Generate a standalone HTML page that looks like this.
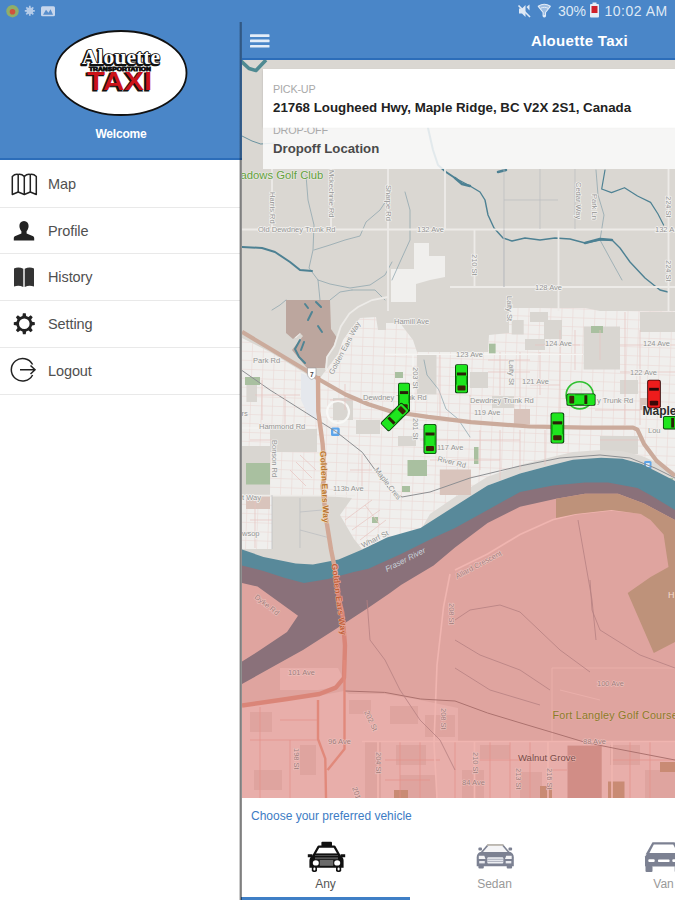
<!DOCTYPE html>
<html lang="en">
<head>
<meta charset="utf-8">
<title>Alouette Taxi</title>
<style>
*{box-sizing:border-box;margin:0;padding:0}
html,body{width:675px;height:900px;overflow:hidden;background:#fff}
body{font-family:"Liberation Sans",sans-serif;position:relative;color:#444}
.abs{position:absolute}
#drawerhead{left:0;top:0;width:675px;height:159.8px;background:#4a86c8;border-bottom:2px solid #2c6db9}
#statusL{left:0;top:0;width:240px;height:22px}
#welcome{left:0;top:127px;width:242px;text-align:center;color:#fff;font-weight:bold;font-size:12px;line-height:14px;letter-spacing:-0.2px}
#menu{left:0;top:160.8px;width:240px}
.mi{height:46.8px;border-bottom:1.5px solid #e9e9e9;position:relative}
.mi span{position:absolute;left:48px;top:14.1px;font-size:14.5px;line-height:18px;color:#505050;letter-spacing:-0.1px}
.mi svg{position:absolute;left:10px;top:10px;width:28px;height:26px}
#main{left:241.5px;top:22px;width:434px;height:878px;background:#fff}
#edge{left:238.6px;top:160px;width:3.2px;height:740px;background:linear-gradient(90deg,rgba(0,0,0,0) 0,rgba(0,0,0,.3) 25%,rgba(0,0,0,.5) 45%,rgba(0,0,0,.5) 80%,rgba(0,0,0,.1) 100%)}
#edgeT{left:238.6px;top:21.5px;width:3.2px;height:138.5px;background:linear-gradient(90deg,rgba(0,0,0,0) 0,rgba(0,0,0,.2) 25%,rgba(0,0,0,.34) 45%,rgba(0,0,0,.34) 80%,rgba(0,0,0,.08) 100%)}
#appbar{left:242px;top:22px;width:433px;height:38px;background:#4a86c8;border-bottom:2.5px solid #2c6db9}
#title{left:531px;top:33px;color:#fff;font-weight:bold;font-size:15px;line-height:16px;letter-spacing:.3px;white-space:nowrap}
#map{left:242px;top:60px;width:433px;height:738px;overflow:hidden;background:#cfccc8}
#pick{left:263px;top:69px;width:412px;height:58px;background:#fff;box-shadow:0 1px 2px rgba(0,0,0,.15)}
#drop{left:263px;top:127px;width:412px;height:41.5px;background:rgba(250,250,250,.86)}
.lbl{font-size:10.8px;line-height:12px;color:#a9a9a9;letter-spacing:-0.2px;white-space:nowrap}
#pickL{left:273px;top:83px}
#dropL{left:273px;top:124.4px}
#addr{left:273px;top:99.5px;font-size:13.3px;line-height:16px;font-weight:bold;color:#222;white-space:nowrap}
#dropT{left:273px;top:141px;font-size:13.2px;line-height:16px;font-weight:bold;color:#4a4a4a;white-space:nowrap}
#bottom{left:243px;top:798px;width:432px;height:102px;background:#fff}
#choose{left:251px;top:809px;font-size:12px;line-height:14px;color:#3d7cc4;white-space:nowrap}
.tab{top:876.6px;width:169px;text-align:center;font-size:12px;line-height:14px}
#sel{left:241px;top:897px;width:169px;height:3px;background:#3f7fc6}
.stat{top:3px;font-size:14px;line-height:16px;color:#dfe9f5;white-space:nowrap}
</style>
</head>
<body>
<div id="drawerhead" class="abs"></div>

<!-- status bar left icons -->
<svg class="abs" style="left:0;top:0" width="120" height="22" viewBox="0 0 120 22">
  <circle cx="12.500" cy="11.200" r="6.200" fill="#8fae6a"/>
  <circle cx="12.500" cy="11.800" r="2.800" fill="#d0523c"/>
  <circle cx="29.800" cy="10.800" r="3.300" fill="#c4d6ee"/>
  <g stroke="#b4cbe8" stroke-width="1.700"><path d="M29.800 5.800v10M24.800 10.800h10M26.300 7.300l7 7M33.300 7.300l-7 7"/></g>
  <rect x="41" y="6.200" width="14" height="10" rx="1.500" fill="#c7d6ec"/>
  <path d="M43 14.700 L46 9.700 L48.500 12.700 L50.500 9.200 L53 14.700Z" fill="#5a8fcc"/>
</svg>

<!-- logo -->
<svg class="abs" style="left:50px;top:26px" width="144" height="96" viewBox="50 26 144 96">
  <ellipse cx="121" cy="73" rx="65.500" ry="42" fill="#fff" stroke="#111" stroke-width="1.800"/>
  <text x="120.300" y="65.200" text-anchor="middle" font-family="'Liberation Serif',serif" font-weight="bold" font-size="22" fill="#111" stroke="#111" stroke-width="2.600" stroke-linejoin="round" textLength="78" lengthAdjust="spacingAndGlyphs">Alouette</text>
  <text x="121" y="64.400" text-anchor="middle" font-family="'Liberation Serif',serif" font-weight="bold" font-size="22" fill="#fff" stroke="#111" stroke-width="1.500" paint-order="stroke" stroke-linejoin="round" textLength="78" lengthAdjust="spacingAndGlyphs">Alouette</text>
  <text x="120" y="70.600" text-anchor="middle" font-family="'Liberation Sans',sans-serif" font-weight="bold" font-size="6.200" fill="#111" stroke="#111" stroke-width=".900" textLength="62" lengthAdjust="spacingAndGlyphs">TRANSPORTATION</text>
  <text x="118.300" y="91.200" text-anchor="middle" font-family="'Liberation Sans',sans-serif" font-weight="bold" font-size="25.600" fill="#111" stroke="#111" stroke-width=".800" textLength="65" lengthAdjust="spacingAndGlyphs">TAXI</text>
  <text x="119.600" y="90.300" text-anchor="middle" font-family="'Liberation Sans',sans-serif" font-weight="bold" font-size="25.600" fill="#cc1219" textLength="65" lengthAdjust="spacingAndGlyphs">TAXI</text>
</svg>
<div id="welcome" class="abs">Welcome</div>

<div id="menu" class="abs">
  <div class="mi"><svg viewBox="0 0 28 26"><g fill="none" stroke="#222" stroke-width="1.5" stroke-linejoin="round"><path d="M2.300 5.500 Q5 2.800 8.200 3.500 Q11.500 2.800 14.300 5.500 Q17 2.800 20.300 3.500 Q23.500 2.800 26.300 5.500 V23.500 L20.300 21 L14.300 23.500 L8.200 21 L2.300 23.500Z"/><path d="M8.200 3.500V21M14.300 5.500V23.500M20.300 3.500V21"/></g></svg><span>Map</span></div>
  <div class="mi"><svg viewBox="0 0 28 26"><path d="M14 3c3 0 4.600 2.200 4.600 5 0 2.300-1 4-2 5.300v2.200l6 2.400c1 .4 1.600 1.200 1.600 2.300V22.500H3.800V20.200c0-1.100.6-1.900 1.600-2.300l6-2.400v-2.200c-1-1.300-2-3-2-5.300 0-2.800 1.600-5 4.600-5z" fill="#222"/></svg><span>Profile</span></div>
  <div class="mi"><svg viewBox="0 0 28 26" style="top:9.200px"><path d="M4 4.500c3-1.300 6-1.300 9.300.3V23c-3.300-1.700-6.300-1.700-9.300-.4zM24 4.500c-3-1.300-6-1.300-9.300.3V23c3.300-1.700 6.300-1.700 9.300-.4z" fill="#333"/></svg><span>History</span></div>
  <div class="mi"><svg viewBox="0 0 28 26"><path fill="#222" fill-rule="evenodd" d="M12.89 2.19L15.71 2.19L16.17 4.92L18.48 5.88L20.73 4.27L22.73 6.27L21.12 8.52L22.08 10.83L24.81 11.29L24.81 14.11L22.08 14.57L21.12 16.88L22.73 19.13L20.73 21.13L18.48 19.52L16.17 20.48L15.71 23.21L12.89 23.21L12.43 20.48L10.12 19.52L7.87 21.13L5.87 19.13L7.48 16.88L6.52 14.57L3.79 14.11L3.79 11.29L6.52 10.83L7.48 8.52L5.87 6.27L7.87 4.27L10.12 5.88L12.43 4.92ZM9.00 12.70a5.30 5.30 0 1 0 10.60 0a5.30 5.30 0 1 0 -10.60 0Z"/></svg><span>Setting</span></div>
  <div class="mi"><svg viewBox="0 0 28 26" style="top:8.200px"><g fill="none" stroke="#222" stroke-width="1.5"><path d="M22.600 8.500A11.300 11.300 0 1 0 22.600 19"/><path d="M10 13.700H25M20.500 9.500L25 13.700L20.500 18"/></g></svg><span>Logout</span></div>
</div>

<div id="main" class="abs"></div>
<div id="appbar" class="abs"></div>
<svg class="abs" style="left:249px;top:33px" width="22" height="16" viewBox="0 0 22 16"><g fill="#e4edf8"><rect x="1" y="1.300" width="19.500" height="2.700" rx=".6"/><rect x="1" y="6.600" width="19.500" height="2.700" rx=".6"/><rect x="1" y="11.900" width="19.500" height="2.700" rx=".6"/></g></svg>
<div id="title" class="abs">Alouette Taxi</div>

<!-- status bar right -->
<svg class="abs" style="left:515px;top:0" width="90" height="22" viewBox="515 0 90 22">
  <path d="M519 8.500h3l3.500-3.500v12l-3.500-3.500h-3z" fill="#dfe9f5"/>
  <path d="M518.500 5.500L530 17" stroke="#dfe9f5" stroke-width="1.600"/>
  <path d="M526.500 7l3 -2.500v6z" fill="#dfe9f5"/>
  <path d="M538.300 6.300c3.600-2.500 8.400-2.500 12 0l-4.800 6.200v3.500h-2.400v-3.500z" fill="#9dbde2" stroke="#e3ecf7" stroke-width="1.100" stroke-linejoin="round"/>
  <path d="M540.500 8.300c2.400-1.300 5.200-1.300 7.600 0" stroke="#e3ecf7" stroke-width="1" fill="none"/>
  <circle cx="544.300" cy="16.300" r="1.300" fill="#e3ecf7"/>
  <rect x="590" y="4" width="9" height="13.500" rx="1" fill="#e6edf6"/>
  <rect x="592.500" y="2.500" width="4" height="2" fill="#e6edf6"/>
  <rect x="591.500" y="6" width="6" height="7" fill="#d0202a"/>
</svg>
<div class="abs stat" style="left:558px">30%</div>
<div class="abs stat" style="left:604.500px;letter-spacing:.5px">10:02 AM</div>

<div id="map" class="abs">
<svg width="433" height="738" viewBox="242 60 433 738" style="display:block">
<defs>
  <pattern id="grid" width="11" height="9" patternUnits="userSpaceOnUse" patternTransform="rotate(2)">
    <path d="M0 .5H11M.5 0V9" stroke="#e2b9b3" stroke-width=".6" fill="none"/>
  </pattern>
  <clipPath id="uclip">
    <path d="M326 370L338 354L343 340L350 330L360 318L376 317L378 330H386V323H400L413 340L417 352H488L489 335L509 333V308H585L600 311H675V479L659 472L642 464L622 458.500L601 457.500L573 459.500L551 465L530 472.500L505 481L487 486L471 495L455 507L420 531L387 538L362 549L354 539L340 515L352 498L326 496L324 476L322 445L318 410L317 382Z"/>
    <path d="M242 338L270 352L303 372L316 380L318 410L322 445L324 476L323 495H272V549H242Z"/>
  </clipPath>
</defs>
<rect x="242" y="59" width="433" height="739" fill="#dad7d2"/>

<!-- urban light regions -->
<g fill="#f0efed">
  <path d="M326 370L338 354L343 340L350 330L360 318L376 317L378 330H386V323H400L413 340L417 352H488L489 335L509 333V308H585L600 311H675V479L659 472L642 464L622 458.500L601 457.500L573 459.500L551 465L530 472.500L505 481L487 486L471 495L455 507L420 531L387 538L362 549L354 539L340 515L352 498L326 496L324 476L322 445L318 410L317 382Z"/>
  <path d="M242 338L270 352L303 372L316 380L318 410L322 445L324 476L323 495H272V549H242Z"/>
  <path d="M391 269H414V243H429V256H445V277L430 280L416 284V302H391Z"/>
  <path d="M300 318L312 322L296 338L288 334Z"/>
</g>
<rect x="242" y="300" width="433" height="260" fill="url(#grid)" clip-path="url(#uclip)" opacity=".42"/>
<!-- grey patches inside the urban belt -->
<g fill="#d9d6d1">
  <rect x="583.700" y="326.500" width="36.300" height="43"/>
  <rect x="544" y="320" width="18" height="19"/>
  <rect x="511.700" y="320" width="12" height="14.500"/>
  <rect x="525" y="339" width="20" height="11"/>
  <rect x="417" y="354.400" width="19.500" height="40"/>
  <rect x="270" y="428.700" width="47" height="23.300"/>
  <rect x="242" y="446" width="28" height="49"/>
  <rect x="246.400" y="384" width="10.600" height="18"/>
  <rect x="333" y="398" width="20" height="22"/>
  <rect x="356" y="420" width="24" height="14"/>
  <rect x="640" y="312" width="35" height="20"/>
  <rect x="530" y="312" width="18" height="10"/>
  <rect x="600" y="436" width="38" height="18"/>
  <rect x="470" y="372" width="18" height="16"/>
  <rect x="492" y="396" width="22" height="12"/>
  <rect x="398" y="436" width="18" height="10"/>
  <rect x="620" y="380" width="18" height="14"/>
  <path d="M455 506L487.600 485.600L520 473.600L552 465L573 459.800L601 457.700L622.400 458.700L641.700 464.100L659 472.700L675 481V472L660 464L642 456L622 451L601 450L573 452L552 457L520 465L487 477L455 497L430 514L420 531Z" fill="#dddad6"/>
</g>
<!-- pale industrial / airport -->
<path d="M301 373L317 379L318 420L308 415L301 400Z" fill="#e5e8ed"/>
<!-- brownish industrial blocks -->
<g fill="#d9c4bc">
  <rect x="439.800" y="469.500" width="31.200" height="25.500"/>
  <rect x="514" y="409" width="16" height="15"/>
  <rect x="246" y="495" width="24" height="14"/>
  <rect x="640" y="398" width="10" height="12"/>
</g>
<!-- parks -->
<g fill="#a9c0a0">
  <rect x="407.500" y="460" width="19.500" height="16"/>
  <rect x="474" y="447" width="4.500" height="17"/>
  <rect x="489" y="343.700" width="6.600" height="9.700"/>
  <rect x="246" y="463" width="24" height="21.500"/>
  <rect x="245" y="377" width="15" height="8"/>
  <rect x="591" y="326" width="12" height="7"/>
  <rect x="395" y="372" width="8" height="6"/>
  <rect x="372" y="517" width="6" height="6"/>
  <rect x="402" y="486" width="8" height="6"/>
  <rect x="667" y="478" width="6" height="14"/>
</g>
<!-- interchange loop -->
<circle cx="338" cy="412" r="11" fill="none" stroke="#f8f8f6" stroke-width="2.200"/>
<!-- transit icons -->
<rect x="331" y="427.600" width="8.700" height="8.400" rx="1.500" fill="#5ea5ea"/>
<rect x="644" y="461" width="7.500" height="8.500" rx="1.500" fill="#5ea5ea"/>
<rect x="333.300" y="429.600" width="4" height="4" fill="#dcebfa"/>
<rect x="646" y="463" width="3.600" height="4" fill="#dcebfa"/>


<!-- golf course north of hwy -->
<path d="M286 300H330L331 329L336.500 337L333 348L327 357L325 368H307L292 350L303 336L300 333L293 339L286 333Z" fill="#bca69e"/>
<g fill="none" stroke="#4f8494" stroke-width="2" stroke-linecap="round">
  <path d="M305 304l3 4M316 302l5 5M312 312l-4 8M318 326l4 6M300 340l-5 9l4 8l6 6M304 342l-3 8"/>
</g>

<!-- south urban (Walnut Grove / Port Kells), tinted by overlay -->
<g fill="#e7e5e2">
  <path d="M242 707L280 701L318 696L344 691L349 694L385 694L420 700L458 708V742H675V798H242Z"/>
  <path d="M280 668H338L344 680L336 687L318 690L280 690Z"/>
</g>
<g fill="#dad7d2">
  <rect x="365" y="742" width="16" height="56"/>
  <rect x="396" y="745" width="30" height="20"/>
  <rect x="400" y="775" width="36" height="23"/>
  <rect x="349" y="700" width="22" height="14"/>
  <rect x="390" y="706" width="28" height="18"/>
  <rect x="425" y="715" width="30" height="22"/>
  <rect x="250" y="712" width="22" height="20"/>
  <rect x="254" y="770" width="28" height="20"/>
  <rect x="300" y="745" width="16" height="30"/>
  <rect x="480" y="745" width="30" height="14"/>
  <rect x="462" y="770" width="22" height="28"/>
  <rect x="520" y="772" width="22" height="26"/>
  <rect x="610" y="745" width="30" height="20"/>
  <rect x="645" y="770" width="30" height="28"/>
</g>
<rect x="567.500" y="745.600" width="34.200" height="52.400" fill="#c4b4ac"/>
<g fill="#b8b090">
  <rect x="608" y="781.500" width="16.500" height="16.500"/>
  <rect x="540" y="786" width="12" height="12"/>
  <rect x="394" y="790" width="14" height="8"/>
  <rect x="660" y="762" width="15" height="10"/>
</g>
<g fill="none" stroke="#e0b8b0" stroke-width=".7">
  <path d="M385 760H440M385 780H430M400 742V798M420 742V798M455 742V798"/>
  <path d="M480 760H548M490 742V798M510 742V798M530 742V798M548 770H567M612 760H675M630 742V798M650 742V798"/>
  <path d="M250 740H318M260 707V798M280 720H318M290 740V798"/>
</g>

<!-- river -->
<path d="M242 549.400L263.500 557L295.700 563.400L313 564.500L338.700 559.500L362.300 549.400L387 537.600L420.500 528L455 506L487.600 485.600L520 473.600L552 465L573 459.800L601 457.700L622.400 458.700L641.700 464.100L659 472.700L675 481V520L644 503.500L618 493.800L585 493.800L556 498.700L520 506.800L487.600 523L455 547.500L433.600 565.500L401 585L390 593L368.400 607.700L335.800 629L303 650L270.600 668L242 684V661.500L257.500 651.700L287 632L298 615.800L280 602.800L257.500 586.500L242 583Z" fill="#58899a"/>
<!--STREAMS-->
<path id="topleft-curve" d="M241 61L249 68.500L256 70.500L266 60" fill="none" stroke="#4f8a92" stroke-width="3.600" stroke-linejoin="round"/>
<!-- thin streams / ditches -->
<g fill="none" stroke="#86a0aa" stroke-width=".7" stroke-linecap="round" stroke-linejoin="round">
  <path d="M306 175L308 200L314 225L313 250L309 268L318 280L320 300"/>
  <path d="M314 250L330 245L345 240L360 236L366 222L380 210L390 195"/>
  <path d="M405 192L410 210L410 240L400 262L392 280"/>
  <path d="M318 280L330 284L350 288L370 285L385 275L392 262"/>
  <path d="M286 300L280 305L272 310M330 300L340 292L352 290"/>
  <path d="M352 290L375 290L385 300"/>
  <path d="M596 170L598 195L604 215L600 240L612 262L622 280"/>
  <path d="M424 360L427 375L438.700 389.600L446 409L458 419L470 437"/>
</g>
<!-- Alouette river & Katzie slough -->
<g fill="none" stroke="#4d8193" stroke-linecap="round" stroke-linejoin="round">
  <path d="M242 247L262 248L275 252L290 262L300 270L312 271" stroke-width="2"/>
  <path d="M455 178L470 186L480 192L485 200L488 215L494 228L503 238L512 241L525 238L540 240L555 238L570 239L585 243L600 240L612 240L620 248L630 262L645 278L660 290L668 292" stroke-width="1.400"/>
  <path d="M585 243L600 239L612 240" stroke-width="2.500"/>
  <path d="M455 178L462 184L470 186M498 172L506 170" stroke-width="2.500"/>
  <path d="M428 128L433 150L438 165L446 172L455 178" stroke-width="2"/>
  <path d="M242 136L252 141L260.700 144L275 143" stroke-width=".8"/>
  <path d="M605 170L601.700 189L611.500 192.600L624.500 187.700L637.500 196L650.600 202.400L658 214L663.600 225" stroke-width="1.200"/>
</g>

<!-- rural light roads -->
<g fill="none" stroke="#edebe8" stroke-width="1.800">
  <path d="M242 229.500H675"/>
  <path d="M450 287H675"/>
  <path d="M272 169V229M331 169V229M388 169V311M445 169V229"/>
  <path d="M474.500 229V287M558.500 229V311M668.500 169V311"/>
  <path d="M326 370L327 357L334.400 346L337.600 336L340.800 326.500L349.400 313.600L358 307L372 300L388 297"/>
  <path d="M242 495.700H355"/>
</g>
<!-- thin parcel lines -->
<g fill="none" stroke="#b9bcc0" stroke-width=".7">
  <path d="M504 169V287M504 200H558M504 287V230M575 169V229M540 169V229"/>
  <path d="M300 498V548M272 549V495M300 530L330 538M300 512L322 510"/>
</g>
<!-- railway -->
<path d="M242 370.500L270 390L336.500 432L362.300 452.300L379.500 476L390 490L402 497L430 492L470 478L520 466L560 458L600 455L630 458L655 468L675 478" fill="none" stroke="#8d8f92" stroke-width="1"/>

<!-- urban pink streets (suggestive grid) -->
<g fill="none" stroke="#e6c3bf" stroke-width=".7">
  <path d="M488 360H530M488 372H530M500 352V395M520 352V410M540 352V395"/>
  <path d="M560 330V425M575 330V370M600 330V360M625 312V425M640 330V425"/>
  <path d="M535 345H580M620 345H675M620 372H675M530 385H560M595 410H640M600 440H640"/>
  <path d="M440 354V420M470 395V420M480 430V470M500 430V480M520 430V470M545 430V465"/>
  <path d="M420 440H520M430 460H500M330 400H390M345 384V410"/>
  <path d="M255 395H300M262 380V420M285 395V428M250 440H272M250 520H272M255 500V548"/>
  <path d="M300 455L316 470M296 462L312 478M290 470L306 486M350 470H372M362 455V490"/>
  <path d="M345 520L372 500M352 530L380 510M360 540L386 520M365 505L380 525"/>
</g>
<!-- minor white streets -->
<g fill="none" stroke="#f6f5f3" stroke-width="1.200">
  <path d="M385 354.400H530"/>
  <path d="M530 354.400H583"/>
  <path d="M242 428H316"/>
  <path d="M413 354V410"/>
</g>

<!-- Lougheed Hwy 7 -->
<g fill="none" stroke-linejoin="round">
  <path d="M242 331.900L270.600 349L306.400 370.500L320 380L345.500 394.500L368.400 404.300L391 411.500L428 416.900L471 422.200L530 426.500L585 427.600L633 427.600L637.400 429.700L643.900 443.700L656.700 460.900L675 476" stroke="#cbab9c" stroke-width="4.200"/>
  <path d="M318 376L318.300 411.500L322.600 443.700L324.700 476L322.600 486L325.800 517L331 549.400L335.400 571L339 600L342.300 612.600L345 645.200L344 677.800L335.800 687.600L319.500 694L287 699L242 705.500" stroke="#d2a896" stroke-width="4.400"/>
  <path d="M344.500 660V700V749L327.600 770M318 700V739L325.300 758.700L326 798" stroke="#dcae9c" stroke-width="2.400"/>
</g>
<!-- hwy shield -->
<path d="M307.500 368h8.500v6c0 3-2 4.500-4.250 5.500c-2.250-1-4.250-2.500-4.250-5.500z" fill="#fff" stroke="#999" stroke-width=".6"/>
<text x="311.700" y="376.500" font-size="6.500" font-weight="bold" text-anchor="middle" fill="#444" font-family="'Liberation Sans',sans-serif">7</text>

<!-- south-of-river roads (tinted by overlay afterwards) -->
<g fill="none" stroke="#f3f0ec" stroke-width="1.600">
  <path d="M455 570L487.600 554L520 534.500L552.800 519.800L575.600 514L611.500 510L640.800 513L657 520L675 531"/>
  <path d="M450 574L443.600 606.500L437 665L434 743L437 798"/>
  <path d="M362 741.500H675"/>
  <path d="M378 741V798M474.500 741V798M548 741V798M612 741V798"/>
</g>
<g fill="none" stroke="#e9e6e2" stroke-width="1">
  <path d="M552 668H675M552 668V741M560 690L600 700"/>
</g>
<!-- CN railway south -->
<path d="M345.500 691L384.700 692.400L420.500 699L455 701L487.600 713L520 722.800L552.800 732.600L585.400 742.400L618 749L675 760" fill="none" stroke="#8c8a88" stroke-width="1"/>
<!-- creeks south -->
<g fill="none" stroke="#9aa0a4" stroke-width=".8">
  <path d="M367 600L370 640L385 660L400 690L420 720L440 740L455 770"/>
  <path d="M455 620L470 610L500 605L520 612L560 650L590 672"/>
  <path d="M455 640L480 655L520 670L550 690M455 668L490 690L540 705"/>
  <path d="M590 580L592 610L600 630L640 655L675 668"/>
  <path d="M578 520L585 560L592 600L596 640"/>
</g>


<!-- pink service-area overlay -->
<path d="M242 565.500L263.500 571L285 578L304 583L328 579L353.700 572L368.400 568.700L401 554L433.600 537.800L455 528L487.600 510L520 492L552.800 485.600L585 482.400L608 482.400L637.500 488L652 496L675 510V798H242Z" fill="rgb(235,68,63)" fill-opacity=".34"/>
<!-- brown reserve -->
<path d="M556 498.700L585 493.800L618 493.800L644 503.500L675 520V642L653.800 653L627.700 593L650.600 577L668.500 567L663.600 534.600L650.600 520L640.800 514L611.500 510L575.600 514L556 518Z" fill="#be927a"/>
<g font-family="'Liberation Sans',sans-serif" font-size="7.500" fill="#939393" stroke="#f4f3f1" stroke-width="1.500" paint-order="stroke" stroke-linejoin="round">
  <text x="258" y="232.300">Old Dewdney Trunk Rd</text>
  <text x="417" y="232.300">132 Ave</text>
  <text x="655" y="232.300">132 A</text>
  <text x="535" y="289.500">128 Ave</text>
  <text transform="translate(269.500 192) rotate(90)">Harris Rd</text>
  <text transform="translate(328.500 170) rotate(90)">Mckechnie Rd</text>
  <text transform="translate(385.500 185) rotate(90)">Sharpe Rd</text>
  <text transform="translate(575.500 182) rotate(90)">Cedar Way</text>
  <text transform="translate(591.500 194) rotate(90)">Park Ln</text>
  <text transform="translate(666 196) rotate(90)">224 St</text>
  <text transform="translate(666 260) rotate(90)">224 St</text>
  <text transform="translate(472 254) rotate(90)">210 St</text>
  <text transform="translate(507 296) rotate(90)">Laity St</text>
  <text transform="translate(509 360) rotate(90)">Laity St</text>
  <text transform="translate(413 367) rotate(90)">203 St</text>
  <text transform="translate(413 418) rotate(90)">201 St</text>
  <text transform="translate(333 375) rotate(-62)">Golden Ears Way</text>
  <text x="394" y="324">Hamill Ave</text>
  <text x="456" y="357">123 Ave</text>
  <text x="545" y="345.500">124 Ave</text>
  <text x="643" y="346">124 Ave</text>
  <text x="630" y="374.500">122 Ave</text>
  <text x="522" y="384">121 Ave</text>
  <text x="253" y="362.500">Park Rd</text>
  <text x="259" y="428.800">Hammond Rd</text>
  <text x="363" y="399.500">Dewdney Trunk Rd</text>
  <text x="470" y="403">Dewdney Trunk Rd</text>
  <text x="597" y="402.500">y Trunk Rd</text>
  <text x="474" y="415">119 Ave</text>
  <text x="437" y="449.500">117 Ave</text>
  <text transform="translate(437 461) rotate(14)">River Rd</text>
  <text x="333" y="490.500">113b Ave</text>
  <text x="242" y="499.500">t Way</text>
  <text transform="translate(271.500 440) rotate(90)">Bonson Rd</text>
  <text transform="translate(374 470) rotate(52)">Maple Cres</text>
  <text transform="translate(363 548) rotate(-27)">Wharf St</text>
  <text x="648" y="433">Lou</text>
  <text x="241.500" y="415.500">rs</text>
  <text x="242" y="536">wsop</text>
</g>
<text x="642.500" y="414.700" font-family="'Liberation Sans',sans-serif" font-size="12" font-weight="bold" fill="#2a2a2a" stroke="#f4f3f1" stroke-width="1.500" paint-order="stroke">Maple</text>
<text x="240.500" y="178.500" font-family="'Liberation Sans',sans-serif" font-size="11.300" fill="#62a03c" stroke="#eceae6" stroke-width="1.200" paint-order="stroke">adows Golf Club</text>
<text transform="translate(320.300 451) rotate(87.500)" font-family="'Liberation Sans',sans-serif" font-size="8.400" font-weight="bold" fill="#b9752f" stroke="#f3dcc0" stroke-width="1.200" paint-order="stroke" textLength="72" lengthAdjust="spacing">Golden Ears Way</text>
<text transform="translate(331.500 564) rotate(82.500)" font-family="'Liberation Sans',sans-serif" font-size="8.400" font-weight="bold" fill="#c0603a" stroke="#eeb0a0" stroke-width="1" paint-order="stroke" textLength="72" lengthAdjust="spacing">Golden Ears Way</text>
<g font-family="'Liberation Sans',sans-serif" font-size="7.500" fill="#a07a78" stroke="#eec4c0" stroke-width="1.200" paint-order="stroke" stroke-linejoin="round">
  <text transform="translate(387 572) rotate(-27)" fill="#c8d4dc" stroke="none" font-style="italic" font-size="8">Fraser River</text>
  <text transform="translate(457 579) rotate(-28)">Allard Crescent</text>
  <text x="597" y="686">100 Ave</text>
  <text x="583" y="744">88 Ave</text>
  <text x="328" y="744">96 Ave</text>
  <text x="288" y="675">101 Ave</text>
  <text transform="translate(254 598) rotate(38)">Dyke Rd</text>
  <text transform="translate(449 603) rotate(90)">208 St</text>
  <text transform="translate(441 708) rotate(90)">208 St</text>
  <text transform="translate(364 712) rotate(65)">202 St</text>
  <text transform="translate(293.500 748) rotate(90)">198 St</text>
  <text transform="translate(376 752) rotate(90)">204 St</text>
  <text transform="translate(473 752) rotate(90)">210 St</text>
  <text transform="translate(516 768) rotate(90)">213 St</text>
  <text transform="translate(547 768) rotate(90)">216 St</text>
  <text transform="translate(352 788) rotate(70)">201</text>
  <text x="462" y="785">84 Ave</text>
</g>
<text x="552.500" y="719.300" font-family="'Liberation Sans',sans-serif" font-size="10.800" letter-spacing=".2" fill="#8a7a28" stroke="#e6b0a8" stroke-width="1" paint-order="stroke">Fort Langley Golf Course</text>
<text x="518" y="761" font-family="'Liberation Sans',sans-serif" font-size="9.500" fill="#7a4a48" stroke="#e8b4ae" stroke-width="1.200" paint-order="stroke">Walnut Grove</text>
<text x="668" y="598" font-family="'Liberation Sans',sans-serif" font-size="9" fill="#f4dcd0">H</text>

<!-- vehicles -->
<g transform="translate(404 397.500) scale(.92 .98)">
    <rect x="-6.500" y="-15" width="13" height="30" rx="2" fill="#083808"/>
    <rect x="-5.600" y="-14.200" width="11.200" height="28.400" rx="1.500" fill="#1ee61e"/>
    <rect x="-4.600" y="-6.500" width="9.200" height="3" fill="#2a2008"/>
    <rect x="-4" y="7" width="8" height="5" rx="1" fill="#3a2408"/>
    <rect x="-5.600" y="-3" width="1" height="9" fill="#0a9a0a"/><rect x="4.600" y="-3" width="1" height="9" fill="#0a9a0a"/>
  </g>
<g transform="translate(395 417) rotate(-135) scale(.95 1)">
    <rect x="-6.500" y="-15" width="13" height="30" rx="2" fill="#083808"/>
    <rect x="-5.600" y="-14.200" width="11.200" height="28.400" rx="1.500" fill="#1ee61e"/>
    <rect x="-4.600" y="-6.500" width="9.200" height="3" fill="#2a2008"/>
    <rect x="-4" y="7" width="8" height="5" rx="1" fill="#3a2408"/>
    <rect x="-5.600" y="-3" width="1" height="9" fill="#0a9a0a"/><rect x="4.600" y="-3" width="1" height="9" fill="#0a9a0a"/>
  </g>
<g transform="translate(430 439)">
    <rect x="-6.500" y="-15" width="13" height="30" rx="2" fill="#083808"/>
    <rect x="-5.600" y="-14.200" width="11.200" height="28.400" rx="1.500" fill="#1ee61e"/>
    <rect x="-4.600" y="-6.500" width="9.200" height="3" fill="#2a2008"/>
    <rect x="-4" y="7" width="8" height="5" rx="1" fill="#3a2408"/>
    <rect x="-5.600" y="-3" width="1" height="9" fill="#0a9a0a"/><rect x="4.600" y="-3" width="1" height="9" fill="#0a9a0a"/>
  </g>
<g transform="translate(461.500 378.800) scale(1 .97)">
    <rect x="-6.500" y="-15" width="13" height="30" rx="2" fill="#083808"/>
    <rect x="-5.600" y="-14.200" width="11.200" height="28.400" rx="1.500" fill="#1ee61e"/>
    <rect x="-4.600" y="-6.500" width="9.200" height="3" fill="#2a2008"/>
    <rect x="-4" y="7" width="8" height="5" rx="1" fill="#3a2408"/>
    <rect x="-5.600" y="-3" width="1" height="9" fill="#0a9a0a"/><rect x="4.600" y="-3" width="1" height="9" fill="#0a9a0a"/>
  </g>
<circle cx="579.700" cy="395.300" r="13.600" fill="rgba(80,220,80,.07)" stroke="#2fc02f" stroke-width="1.600"/>
<g transform="translate(581 399.600) rotate(90) scale(.95 .97)">
    <rect x="-6.500" y="-15" width="13" height="30" rx="2" fill="#083808"/>
    <rect x="-5.600" y="-14.200" width="11.200" height="28.400" rx="1.500" fill="#1ee61e"/>
    <rect x="-4.600" y="-6.500" width="9.200" height="3" fill="#2a2008"/>
    <rect x="-4" y="7" width="8" height="5" rx="1" fill="#3a2408"/>
    <rect x="-5.600" y="-3" width="1" height="9" fill="#0a9a0a"/><rect x="4.600" y="-3" width="1" height="9" fill="#0a9a0a"/>
  </g>
<g transform="translate(557.400 428) scale(1.050 1.030)">
    <rect x="-6.500" y="-15" width="13" height="30" rx="2" fill="#083808"/>
    <rect x="-5.600" y="-14.200" width="11.200" height="28.400" rx="1.500" fill="#1ee61e"/>
    <rect x="-4.600" y="-6.500" width="9.200" height="3" fill="#2a2008"/>
    <rect x="-4" y="7" width="8" height="5" rx="1" fill="#3a2408"/>
    <rect x="-5.600" y="-3" width="1" height="9" fill="#0a9a0a"/><rect x="4.600" y="-3" width="1" height="9" fill="#0a9a0a"/>
  </g>
<g transform="translate(654 394) scale(1.050 .95)">
    <rect x="-6.500" y="-15" width="13" height="30" rx="2" fill="#3a0606"/>
    <rect x="-5.600" y="-14.200" width="11.200" height="28.400" rx="1.500" fill="#ee1c1c"/>
    <rect x="-4.600" y="-6.500" width="9.200" height="3" fill="#2a0808"/>
    <rect x="-4" y="7" width="8" height="5" rx="1" fill="#3a0808"/>
  </g>
<g transform="translate(677.500 422.700) rotate(-90) scale(1.050 .97)">
    <rect x="-6.500" y="-15" width="13" height="30" rx="2" fill="#083808"/>
    <rect x="-5.600" y="-14.200" width="11.200" height="28.400" rx="1.500" fill="#1ee61e"/>
    <rect x="-4.600" y="-6.500" width="9.200" height="3" fill="#2a2008"/>
    <rect x="-4" y="7" width="8" height="5" rx="1" fill="#3a2408"/>
    <rect x="-5.600" y="-3" width="1" height="9" fill="#0a9a0a"/><rect x="4.600" y="-3" width="1" height="9" fill="#0a9a0a"/>
  </g>


</svg>
</div>

<div id="pick" class="abs"></div>
<div id="drop" class="abs"></div>
<div id="dropL" class="abs lbl">DROP-OFF</div>
<div class="abs" style="left:263px;top:119px;width:412px;height:8.600px;background:linear-gradient(#fff 0,#fff 88%,rgba(255,255,255,.5) 100%)"></div>
<div id="pickL" class="abs lbl">PICK-UP</div>
<div id="addr" class="abs">21768 Lougheed Hwy, Maple Ridge, BC V2X 2S1, Canada</div>
<div id="dropT" class="abs">Dropoff Location</div>

<div id="bottom" class="abs"></div>
<div id="choose" class="abs">Choose your preferred vehicle</div>
<svg class="abs" style="left:300px;top:838px" width="52" height="38" viewBox="300 838 52 38">
  <rect x="321.400" y="841.800" width="10.600" height="4.600" rx="1" fill="#111"/>
  <path d="M318.600 846.600H334.400L340 856.500H313Z" fill="#fff" stroke="#111" stroke-width="2.200" stroke-linejoin="round"/>
  <rect x="314.500" y="853.400" width="24" height="1.600" fill="#111"/>
  <path d="M307.800 854.300h4.600v3h-4.600zM340.600 854.300h4.600v3h-4.600z" fill="#111"/>
  <path d="M312.600 855.500H340.400C342.600 856.500 343.600 858.500 343.600 861V867.800H309.400V861C309.400 858.500 310.400 856.500 312.600 855.500Z" fill="#111"/>
  <rect x="311.800" y="865" width="5.200" height="7" rx="1.800" fill="#111"/>
  <rect x="336" y="865" width="5.200" height="7" rx="1.800" fill="#111"/>
  <rect x="313.400" y="867.400" width="2" height="3" rx="1" fill="#fff"/>
  <rect x="337.600" y="867.400" width="2" height="3" rx="1" fill="#fff"/>
  <ellipse cx="315.800" cy="862.900" rx="3" ry="2.700" fill="#fff"/>
  <ellipse cx="337.200" cy="862.900" rx="3" ry="2.700" fill="#fff"/>
  <rect x="319.800" y="860" width="13.400" height="5.800" fill="#6a6a6a"/>
  <rect x="315" y="857.300" width="23" height="2" fill="#555"/>
</svg>
<svg class="abs" style="left:470px;top:840px" width="50" height="32" viewBox="470 840 50 32">
  <g fill="#7c8192">
    <path d="M487.500 844.300H503L510.500 853H480Z"/>
    <rect x="478.400" y="847.600" width="3.600" height="3" rx="1"/>
    <rect x="508.500" y="847.600" width="3.600" height="3" rx="1"/>
    <path d="M480 852H510.500C512.800 853 513.800 855 513.800 857.500V866.300H476.700V857.500C476.700 855 477.700 853 480 852Z"/>
    <rect x="478.400" y="865" width="5.400" height="3.600" rx="1"/>
    <rect x="506.700" y="865" width="5.400" height="3.600" rx="1"/>
  </g>
  <path d="M488.600 845.600H502L507.500 852H483Z" fill="#f4f4f6"/>
  <path d="M487 845H503.500" stroke="#c9c2b4" stroke-width="1.400"/>
  <path d="M478.800 855.800h5.500l1.200 3.200h-6.700zM511.700 855.800h-5.500l-1.200 3.200h6.700z" fill="#f4f4f6"/>
  <rect x="487.300" y="857.200" width="16" height="6.400" rx="1" fill="#eceef2"/>
  <path d="M487.300 859.300h16M487.300 861.400h16" stroke="#9a9fae" stroke-width=".8"/>
  <rect x="479.200" y="861" width="5.600" height="2.400" fill="#e8e9ee"/>
  <rect x="505.700" y="861" width="5.600" height="2.400" fill="#e8e9ee"/>
</svg>
<svg class="abs" style="left:640px;top:838px" width="35" height="38" viewBox="640 838 35 38">
  <g fill="#7c8192">
    <path d="M652.500 842.200H674.500L681.400 854.500H645.600Z"/>
    <path d="M647.600 853H679.400L682 856.500V866.600H645V856.500Z"/>
    <rect x="645.500" y="866" width="7" height="6" rx="1"/>
    <rect x="674.700" y="866" width="7" height="6" rx="1"/>
  </g>
  <path d="M653.800 844.400H673.200L677.600 853H649.400Z" fill="#fff"/>
  <rect x="648.300" y="859.300" width="6.400" height="2.700" rx="1" fill="#fff"/>
  <rect x="672.300" y="859.300" width="6.400" height="2.700" rx="1" fill="#fff"/>
  <rect x="658" y="859.600" width="11.600" height="2.400" rx=".8" fill="#fff"/>
</svg>

<div class="abs tab" style="left:241px;color:#555">Any</div>
<div class="abs tab" style="left:410px;color:#999">Sedan</div>
<div class="abs tab" style="left:579px;color:#999">Van</div>
<div id="sel" class="abs"></div>
<div id="edge" class="abs"></div>
<div id="edgeT" class="abs"></div>
</body>
</html>
